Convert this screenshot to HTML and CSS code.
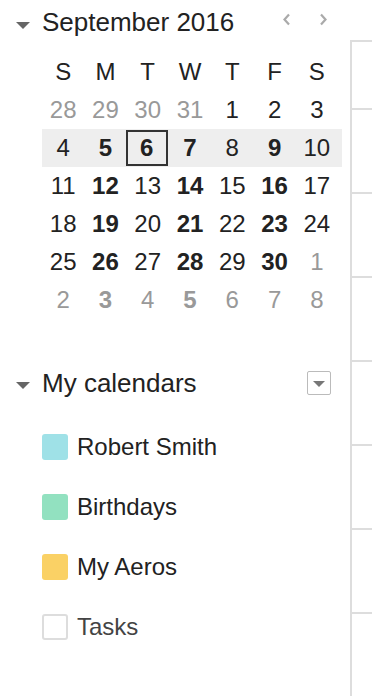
FILE: index.html
```html
<!DOCTYPE html>
<html lang="en">
<head>
    <meta charset="UTF-8">
    <meta name="viewport" content="width=device-width, initial-scale=1.0">
    <title>Calendar</title>
    <link rel="stylesheet" href="styles.css">
</head>
<body>
    <div class="page">
        <div class="sidebar">
            <!-- mini month -->
            <div class="mini-head">
                <span class="caret"></span>
                <span class="month">September 2016</span>
                <div class="nav">
                    <svg width="9" height="13" viewBox="0 0 9 13"><path d="M7 1.5 L2.5 6.5 L7 11.5" fill="none" stroke="#aaa" stroke-width="2.2"/></svg>
                    <svg width="9" height="13" viewBox="0 0 9 13"><path d="M2 1.5 L6.5 6.5 L2 11.5" fill="none" stroke="#aaa" stroke-width="2.2"/></svg>
                </div>
            </div>

            <div class="month-grid">
                <div class="week dow">
                    <span>S</span><span>M</span><span>T</span><span>W</span><span>T</span><span>F</span><span>S</span>
                </div>
                <div class="week">
                    <span class="other">28</span><span class="other">29</span><span class="other">30</span><span class="other">31</span><span>1</span><span>2</span><span>3</span>
                </div>
                <div class="week current">
                    <span>4</span><span class="busy">5</span><span class="busy today">6</span><span class="busy">7</span><span>8</span><span class="busy">9</span><span>10</span>
                </div>
                <div class="week">
                    <span>11</span><span class="busy">12</span><span>13</span><span class="busy">14</span><span>15</span><span class="busy">16</span><span>17</span>
                </div>
                <div class="week">
                    <span>18</span><span class="busy">19</span><span>20</span><span class="busy">21</span><span>22</span><span class="busy">23</span><span>24</span>
                </div>
                <div class="week">
                    <span>25</span><span class="busy">26</span><span>27</span><span class="busy">28</span><span>29</span><span class="busy">30</span><span class="other">1</span>
                </div>
                <div class="week">
                    <span class="other">2</span><span class="other busy">3</span><span class="other">4</span><span class="other busy">5</span><span class="other">6</span><span class="other">7</span><span class="other">8</span>
                </div>
            </div>

            <!-- my calendars -->
            <div class="cal-head">
                <span class="caret"></span>
                <span class="cal-title">My calendars</span>
                <span class="menu-btn"><span class="menu-caret"></span></span>
            </div>
            <ul class="cal-list">
                <li><span class="swatch cyan"></span>Robert Smith</li>
                <li><span class="swatch green"></span>Birthdays</li>
                <li><span class="swatch yellow"></span>My Aeros</li>
                <li class="off"><span class="swatch empty"></span>Tasks</li>
            </ul>
        </div>

        <div class="view">
            <div class="slot first"></div>
            <div class="slot"></div>
            <div class="slot"></div>
            <div class="slot"></div>
            <div class="slot"></div>
            <div class="slot"></div>
            <div class="slot"></div>
            <div class="slot"></div>
        </div>
    </div>
</body>
</html>
```

FILE: styles.css
```css
body {
    margin: 0;
    font-family: "Liberation Sans", Arial, sans-serif;
    color: #222;
    background-color: white;
}
.page {
    display: flex;
    height: 696px;
    overflow: hidden;
}
.sidebar {
    width: 350px;
    flex-shrink: 0;
}
.caret {
    width: 0;
    height: 0;
    border-left: 7px solid transparent;
    border-right: 7px solid transparent;
    border-top: 7px solid #666;
    margin-left: 16px;
    margin-right: 12px;
    margin-top: 5px;
}
.mini-head {
    display: flex;
    align-items: center;
    height: 45px;
}
.month {
    font-size: 26px;
}
.nav {
    margin-left: auto;
    margin-right: 22px;
    margin-top: -7px;
    display: flex;
    gap: 28px;
}
.month-grid {
    margin-top: 8px;
    margin-left: 42px;
    width: 300px;
}
.week {
    display: grid;
    grid-template-columns: repeat(7, 1fr);
    height: 38px;
    font-size: 24px;
    padding-right: 4px;
}
.week span {
    display: flex;
    align-items: center;
    justify-content: center;
    box-sizing: border-box;
}
.week.current {
    background-color: #eee;
}
.other {
    color: #999;
}
.busy {
    font-weight: bold;
}
.today {
    border: 2px solid #333;
    margin: 1px 1px 1px -1px;
}
.cal-head {
    display: flex;
    align-items: center;
    height: 44px;
    margin-top: 42px;
}
.cal-title {
    font-size: 26px;
}
.menu-btn {
    margin-left: auto;
    margin-right: 19px;
    width: 24px;
    height: 24px;
    box-sizing: border-box;
    border: 1px solid #bbb;
    border-radius: 2px;
    display: flex;
    align-items: center;
    justify-content: center;
}
.menu-caret {
    width: 0;
    height: 0;
    border-left: 6px solid transparent;
    border-right: 6px solid transparent;
    border-top: 6px solid #777;
    margin-top: 2px;
}
.cal-list {
    list-style: none;
    margin: 12px 0 0 0;
    padding: 0;
}
.cal-list li {
    display: flex;
    align-items: center;
    height: 60px;
    padding-left: 42px;
    font-size: 24px;
}
.cal-list li.off {
    color: #444;
}
.swatch {
    width: 26px;
    height: 26px;
    border-radius: 3px;
    margin-right: 9px;
    box-sizing: border-box;
}
.cyan {
    background-color: #9fe1e7;
}
.green {
    background-color: #92e1c0;
}
.yellow {
    background-color: #fad165;
}
.empty {
    border: 2px solid #ddd;
}
.view {
    flex: 1;
    margin-top: 40px;
    border-left: 2px solid #ddd;
    border-top: 2px solid #ddd;
}
.slot {
    height: 82px;
    border-bottom: 2px solid #ddd;
}
.slot.first {
    height: 66px;
}
```
